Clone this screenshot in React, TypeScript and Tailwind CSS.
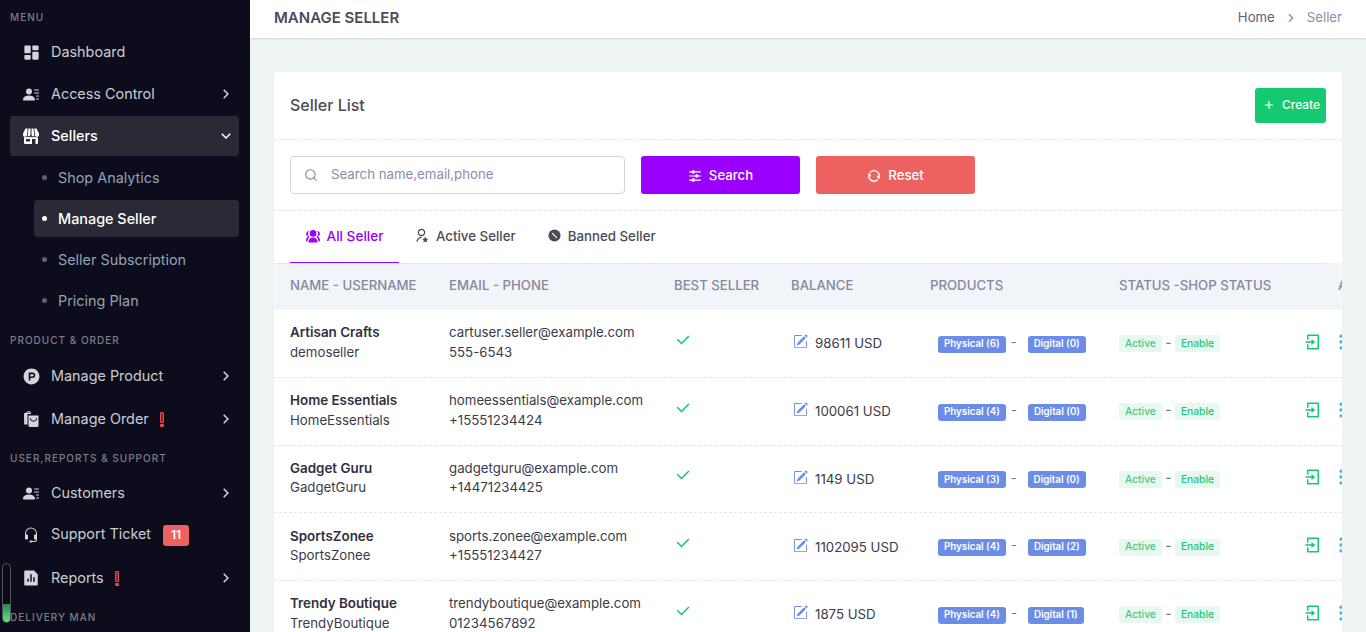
import React from 'react';
import {
  RiDashboardFill,
  RiProductHuntFill,
  RiArrowRightSLine,
  RiArrowDownSLine,
  RiFileChartFill,
  RiSearchLine,
  RiAddLine,
  RiRefreshLine,
  RiEqualizerFill,
  RiUserStarLine,
  RiLoginBoxLine,
  RiMore2Fill,
  RiCheckLine,
} from 'react-icons/ri';
import { BsPersonLinesFill, BsHeadset, BsPencilSquare } from 'react-icons/bs';

const sellers = [
  { name: 'Artisan Crafts', user: 'demoseller', email: 'cartuser.seller@example.com', phone: '555-6543', balance: '98611 USD', physical: 6, digital: 0 },
  { name: 'Home Essentials', user: 'HomeEssentials', email: 'homeessentials@example.com', phone: '+15551234424', balance: '100061 USD', physical: 4, digital: 0 },
  { name: 'Gadget Guru', user: 'GadgetGuru', email: 'gadgetguru@example.com', phone: '+14471234425', balance: '1149 USD', physical: 3, digital: 0 },
  { name: 'SportsZonee', user: 'SportsZonee', email: 'sports.zonee@example.com', phone: '+15551234427', balance: '1102095 USD', physical: 4, digital: 2 },
  { name: 'Trendy Boutique', user: 'TrendyBoutique', email: 'trendyboutique@example.com', phone: '01234567892', balance: '1875 USD', physical: 4, digital: 1 },
];

const SectionLabel = ({ children, className = '' }: { children: React.ReactNode; className?: string }) => (
  <p className={`pl-[10px] text-[10px] leading-3 font-medium tracking-[1px] text-[#7d7d8a] ${className}`}>{children}</p>
);

// bag with a smile, the order icon in the menu
const OrderIcon = () => (
  <svg viewBox="0 0 16 16" width="16" height="16" fill="currentColor">
    <path d="M3 1.500h.9C4 .6 4.800 0 5.700 0s1.700.6 1.800 1.500h.5V3H4.500v10.500H1.200L1 3.200c0-.9.8-1.700 2-1.700Zm1.100 0h3.100C7 1 6.400.7 5.700.7S4.400 1 4.100 1.500Z" />
    <path fillRule="evenodd" d="M5.500 4.500h10v10a1.500 1.500 0 0 1-1.500 1.500H7a1.500 1.500 0 0 1-1.500-1.500v-10Zm1.300 2.600c.3 2.300 1.700 3.600 3.700 3.600s3.400-1.300 3.700-3.600h-.9c-.3 1.800-1.300 2.700-2.800 2.700s-2.500-.9-2.800-2.700h-.9Z" />
  </svg>
);

// shop front with a striped awning
const StoreIcon = () => (
  <svg viewBox="0 0 16 16" width="16" height="16" fill="currentColor">
    <path d="M2.500.5h2.200L4 7a1.900 1.900 0 0 1-4-.3V5.500L2.500.5Z" />
    <path d="M5.500.5h2v6.600a2 2 0 0 1-2.800.9L5.500.5Z" />
    <path d="M8.500.5h2l.8 7.500a2 2 0 0 1-2.800-.9V.5Z" />
    <path d="M11.300.5h2.200l2.500 5v1.200a1.900 1.900 0 0 1-4 .3l-.7-6.500Z" />
    <path fillRule="evenodd" d="M1 9.200c1 .3 2 .2 3-.4 1.200.7 2.700.7 4 0 1.300.7 2.800.7 4 0 1 .6 2 .7 3 .4V15a1 1 0 0 1-1 1H2a1 1 0 0 1-1-1V9.200ZM3 11v2.500h4V11H3Zm6 0v5h3.500v-5H9Z" />
  </svg>
);

// front person with two behind, the all seller tab
const GroupIcon = () => (
  <svg viewBox="0 0 16 16" width="14" height="14" fill="currentColor" className="mr-[7px]">
    <circle cx="8" cy="5" r="3.800" />
    <path d="M2.800 15c0-3.200 2.300-5.300 5.200-5.300s5.200 2.100 5.200 5.300v.5H2.800V15Z" />
    <path d="M3.300 2.200A3 3 0 0 0 3 8.200c-1.700.8-3 2.500-3 4.800v1h1.700c.1-2.300 1-3.900 2.500-5A5 5 0 0 1 3.300 2.200Z" />
    <path d="M12.700 2.200A3 3 0 0 1 13 8.200c1.700.8 3 2.500 3 4.800v1h-1.700c-.1-2.300-1-3.900-2.500-5a5 5 0 0 0 .9-6.800Z" />
  </svg>
);

const AlertMark = () => (
  <span className="ml-[11px] flex h-[15px] w-[4px] flex-col gap-[1px]">
    <span className="h-[11px] rounded-[1px] border border-[#e5484d] bg-[#8a2433]" />
    <span className="h-[3px] rounded-[1px] bg-[#e5484d]" />
  </span>
);

// filled circle with a white bar across it, the banned tab
const BannedIcon = () => (
  <svg viewBox="0 0 14 14" width="13" height="13" className="ml-[1px] mr-[7px]">
    <circle cx="7" cy="7" r="6.500" fill="#4a4b57" />
    <path d="M4.500 4.500l5 5" stroke="#fff" strokeWidth="1.300" />
  </svg>
);

interface MenuItemProps {
  icon: React.ReactNode;
  label: string;
  arrow?: boolean;
  alert?: boolean;
  badge?: string;
  className?: string;
}

const MenuItem: React.FC<MenuItemProps> = ({ icon, label, arrow, alert, badge, className = 'h-[38px]' }) => (
  <div className={`ml-[10px] mr-[11px] flex items-center pl-[13px] pr-[4px] text-[14.4px] text-[#c9ccd3] ${className}`}>
    <span className="flex w-[16px] justify-center text-[17px] text-[#d3d5da]">{icon}</span>
    <span className={badge ? 'ml-[12px] -mt-[2px]' : 'ml-[12px]'}>{label}</span>
    {alert && <AlertMark />}
    {badge && (
      <span className="ml-[12px] flex h-[21px] w-[26px] items-center justify-center rounded-[3px] bg-[#ee6161] text-[12px] font-semibold text-white">
        {badge}
      </span>
    )}
    {arrow && <RiArrowRightSLine className="ml-auto text-[18px] text-[#d3d5da]" />}
  </div>
);

const SubItem = ({ label, active }: { label: string; active?: boolean }) => (
  <div className={`ml-[34px] mr-[11px] flex h-[37px] items-center rounded-[4px] pl-[8px] text-[14.4px] ${active ? 'bg-[#2a2935] font-medium text-white' : 'text-[#8fa3b5]'}`}>
    <span className={`h-[5px] w-[5px] rounded-full ${active ? 'bg-white' : 'bg-[#5d6470]'}`} />
    <span className="ml-[11px]">{label}</span>
  </div>
);

const Sidebar = () => (
  <aside className="relative h-[632px] w-[250px] shrink-0 overflow-hidden bg-[#0d0c1c] pt-[11px]">
    <SectionLabel>MENU</SectionLabel>
    <div className="mt-[10px] flex flex-col gap-[4px]">
      <MenuItem icon={<RiDashboardFill className="shrink-0 text-[19px]" />} label="Dashboard" />
      <MenuItem icon={<BsPersonLinesFill />} label="Access Control" arrow />
      <div className="ml-[10px] mr-[11px] -mt-[1px] flex h-[40px] items-center rounded-[4px] bg-[#2a2935] pl-[13px] pr-[4px] text-[14.4px] font-medium text-white">
        <span className="flex w-[16px] justify-center"><StoreIcon /></span>
        <span className="ml-[12px]">Sellers</span>
        <RiArrowDownSLine className="ml-auto text-[18px]" />
      </div>
    </div>
    <div className="mt-[3px] flex flex-col gap-[4px]">
      <SubItem label="Shop Analytics" />
      <SubItem label="Manage Seller" active />
      <SubItem label="Seller Subscription" />
      <SubItem label="Pricing Plan" />
    </div>
    <SectionLabel className="mt-[15px]">PRODUCT &amp; ORDER</SectionLabel>
    <div className="mt-[11px] flex flex-col gap-[5px]">
      <MenuItem icon={<RiProductHuntFill className="shrink-0 text-[19px]" />} label="Manage Product" arrow />
      <MenuItem icon={<OrderIcon />} label="Manage Order" arrow alert />
    </div>
    <SectionLabel className="mt-[14px]">USER,REPORTS &amp; SUPPORT</SectionLabel>
    <div className="mt-[10px] flex flex-col gap-[4px]">
      <MenuItem icon={<BsPersonLinesFill />} label="Customers" arrow />
      <MenuItem icon={<BsHeadset />} label="Support Ticket" badge="11" />
      <MenuItem icon={<RiFileChartFill className="shrink-0 text-[18px]" />} label="Reports" arrow alert className="mt-[1px] h-[38px]" />
    </div>
    <SectionLabel className="mt-[14px]">DELIVERY MAN</SectionLabel>
    <div className="absolute left-[2px] top-[563px] flex h-[60px] w-[9px] items-end overflow-hidden rounded-full border border-[#55555f] bg-[#0a0a12]">
      <div className="h-[18px] w-full bg-linear-to-b from-[#1c8f47] to-[#62e583]" />
    </div>
  </aside>
);

const TableHead = () => (
  <div className="w-[1140px] bg-[#f1f4f8]">
    <div className="h-px w-[1052px] bg-[#e4e7eb]" />
    <div className="grid h-[46px] grid-cols-[159px_225px_117px_139px_189px_219px_80px] items-center pb-[2px] pl-[16px] text-[13.2px] font-medium text-[#85889f]">
      <span>NAME - USERNAME</span>
      <span>EMAIL - PHONE</span>
      <span>BEST SELLER</span>
      <span>BALANCE</span>
      <span>PRODUCTS</span>
      <span className="whitespace-nowrap">STATUS -SHOP STATUS</span>
      <span>ACTION</span>
    </div>
  </div>
);

const Row = ({ s }: { s: (typeof sellers)[number] }) => (
  <div className="grid h-[67.75px] grid-cols-[159px_225px_117px_139px_189px_185px_60px] items-center border-b border-dashed border-[#e2e6ec] pl-[16px] text-[13.25px] text-[#3a3b4a]">
    <div className="-mt-[1px] leading-[19.5px]">
      <p className="text-[13.4px] font-semibold text-[#2f3040]">{s.name}</p>
      <p>{s.user}</p>
    </div>
    <div className="-mt-[1px] leading-[19.5px]">
      <p>{s.email}</p>
      <p>{s.phone}</p>
    </div>
    <RiCheckLine className="-mt-[7px] text-[18px] text-[#15c26b]" />
    <div className="flex items-center pt-[2px]">
      <BsPencilSquare className="-mt-[5px] ml-[2px] text-[15px] text-[#6b8de8]" />
      <span className="ml-[7px]">{s.balance}</span>
    </div>
    <div className="ml-[8px] flex items-center pt-[2px] text-[9.75px] font-semibold text-white">
      <span className="flex h-[17px] items-center rounded-[3px] bg-[#6b8de8] px-[6px]">Physical ({s.physical})</span>
      <span className="mx-[5px] -mt-[3px] text-[13px] font-normal text-[#777]">-</span>
      <span className="ml-[6px] flex h-[17px] items-center rounded-[3px] bg-[#6b8de8] px-[6px]">Digital ({s.digital})</span>
    </div>
    <div className="flex items-center pt-[1px] text-[10.25px] font-medium">
      <span className="flex h-[17px] items-center rounded-[3px] bg-[#e7f8f0] px-[6px] text-[#4cc77f]">Active</span>
      <span className="mx-[3.500px] -mt-[3px] text-[13px] text-[#777]">-</span>
      <span className="flex h-[17px] items-center rounded-[3px] bg-[#e7f8f0] px-[6px] text-[#1fc67a]">Enable</span>
    </div>
    <div className="-mt-[3px] flex items-center">
      <RiLoginBoxLine className="shrink-0 text-[18px] text-[#14c96f]" />
      <RiMore2Fill className="ml-[9px] shrink-0 text-[20px] text-[#45b6e6]" />
    </div>
  </div>
);

export default function App() {
  return (
    <div className="flex h-[632px] w-[1366px] overflow-hidden bg-[#eef3f3] font-['Inter',sans-serif]">
      <Sidebar />
      <main className="min-w-0 flex-1">
        <header className="flex h-[38px] items-center justify-between bg-white px-[24px] pb-[2px] shadow-[0_1px_2px_rgba(0,0,0,0.12)]">
          <h1 className="text-[15px] font-semibold text-[#4a4b57]">MANAGE SELLER</h1>
          <div className="flex items-center text-[13.2px]">
            <span className="text-[#5c6073]">Home</span>
            <RiArrowRightSLine className="mx-[8px] text-[16px] text-[#8a8ea5]" />
            <span className="text-[#8a8ea5]">Seller</span>
          </div>
        </header>
        <section className="ml-[24px] mt-[34px] w-[1068px] overflow-hidden rounded-t-[4px] bg-white">
          <div className="flex h-[68px] items-center justify-between border-b border-dashed border-[#e2e6ec] px-[16px]">
            <h2 className="pb-[2px] text-[16px] font-medium text-[#4a4b57]">Seller List</h2>
            <button className="flex h-[35px] w-[71px] items-center justify-center rounded-[3px] bg-[#14c96f] pb-[1px] pl-[1px] text-[11.9px] font-medium text-white">
              <RiAddLine className="mr-[6px] text-[14px]" />Create
            </button>
          </div>
          <div className="flex h-[71px] items-center gap-[16px] border-b border-dashed border-[#e2e6ec] px-[16px]">
            <div className="flex h-[38px] w-[335px] items-center rounded-[4px] border border-[#d0d4de] pb-[1px] pl-[13px] text-[13.25px] text-[#8a8ea5]">
              <RiSearchLine className="text-[14px]" />
              <span className="ml-[13px]">Search name,email,phone</span>
            </div>
            <button className="flex h-[38px] w-[159px] items-center justify-center rounded-[3px] bg-[#9900ff] pt-[1px] text-[13.2px] font-medium text-white">
              <RiEqualizerFill className="mr-[7px] text-[14px]" />Search
            </button>
            <button className="flex h-[38px] w-[159px] items-center justify-center rounded-[3px] bg-[#ee6161] pt-[1px] text-[13.2px] font-medium text-white">
              <RiRefreshLine className="mr-[7px] text-[14px]" strokeWidth={0.6} />Reset
            </button>
          </div>
          <div className="flex h-[52px] pl-[16px] text-[13.3px] font-medium leading-4 text-[#4a4b57]">
            <div className="flex w-[109px] items-center justify-center border-b border-[#9900ff] pb-[2px] text-[13.6px] text-[#9900ff]">
              <GroupIcon />All Seller
            </div>
            <div className="ml-[15px] flex items-center pb-[3px]">
              <RiUserStarLine className="mr-[7px] text-[15px]" />Active Seller
            </div>
            <div className="ml-[31px] flex items-center pb-[3px]">
              <BannedIcon />Banned Seller
            </div>
          </div>
          <TableHead />
          {sellers.map((s) => (
            <Row key={s.name} s={s} />
          ))}
        </section>
      </main>
    </div>
  );
}
